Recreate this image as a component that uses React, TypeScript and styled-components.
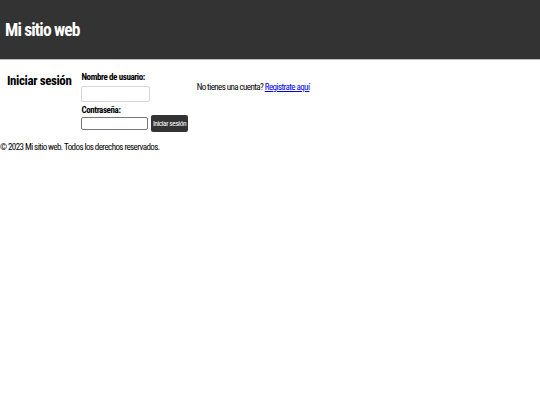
import React from "react";
import styled, { createGlobalStyle } from "styled-components";

const GlobalStyle = createGlobalStyle`
  html, body {
    margin: 0;
    padding: 0;
    background: #ffffff;
  }
  body {
    font-family: "Roboto Condensed", "Liberation Sans", Arial, sans-serif;
    color: #000000;
  }
`;

const Header = styled.header`
  display: flex;
  align-items: center;
  height: 59px;
  padding-left: 5px;
  background: #333333;
  border-bottom: 1px solid #b9b9b9;
`;

const SiteTitle = styled.h1`
  margin: 0;
  color: #ffffff;
  font-size: 17.5px;
  font-weight: 700;
  line-height: 20px;
  letter-spacing: -0.85px;
`;

const Main = styled.main`
  display: flex;
  align-items: flex-start;
  padding: 13px 0 0 7px;
`;

const SectionTitle = styled.h2`
  margin: 0;
  font-size: 13px;
  font-weight: 700;
  line-height: 15px;
  letter-spacing: -0.4px;
  white-space: nowrap;
`;

const LoginForm = styled.form`
  display: flex;
  flex-direction: column;
  align-items: flex-start;
  margin-left: 10px;
`;

const FieldLabel = styled.label<{ $gap?: number }>`
  display: block;
  margin-top: ${(p) => p.$gap ?? 0}px;
  font-size: 9px;
  font-weight: 700;
  line-height: 9px;
  letter-spacing: -0.4px;
  white-space: nowrap;
`;

const TextInput = styled.input`
  box-sizing: border-box;
  width: 69px;
  height: 15.5px;
  margin: 4px 0 0;
  padding: 0 3px;
  border: 1px solid #d6d6d6;
  border-radius: 2px;
  background: #ffffff;
  font: inherit;
  font-size: 8px;
`;

const PasswordRow = styled.div`
  display: flex;
  align-items: center;
`;

const PasswordInput = styled.input`
  box-sizing: border-box;
  width: 67px;
  height: 13.5px;
  margin: 0;
  padding: 0 2px;
  border: 1px solid #767676;
  border-radius: 2px;
  background: #ffffff;
  font: inherit;
  font-size: 8px;
`;

const SubmitButton = styled.button`
  box-sizing: border-box;
  height: 17.5px;
  margin-left: 3px;
  padding: 0 1.5px;
  border: none;
  border-radius: 2px;
  background: #333333;
  color: #ffffff;
  font-family: inherit;
  font-size: 7.5px;
  line-height: 17.5px;
  letter-spacing: -0.45px;
  white-space: nowrap;
  cursor: pointer;
`;

const SignupNote = styled.p`
  margin: 9px 0 0 9px;
  font-size: 9px;
  line-height: 10px;
  letter-spacing: -0.58px;
  white-space: nowrap;
`;

const SignupLink = styled.a`
  color: #0000ee;
  text-decoration: underline;

  &:visited {
    color: #0000ee;
  }
`;

const Footer = styled.footer`
  padding-top: 10px;
  font-size: 9px;
  line-height: 10px;
  letter-spacing: -0.58px;
  white-space: nowrap;
`;

export default function App() {
  return (
    <>
      <GlobalStyle />
      <Header>
        <SiteTitle>Mi sitio web</SiteTitle>
      </Header>
      <Main>
        <SectionTitle>Iniciar sesión</SectionTitle>
        <LoginForm onSubmit={(e) => e.preventDefault()}>
          <FieldLabel htmlFor="username">Nombre de usuario:</FieldLabel>
          <TextInput id="username" type="text" name="username" />
          <FieldLabel htmlFor="password" $gap={4}>
            Contraseña:
          </FieldLabel>
          <PasswordRow>
            <PasswordInput id="password" type="password" name="password" />
            <SubmitButton type="submit">Iniciar sesión</SubmitButton>
          </PasswordRow>
        </LoginForm>
        <SignupNote>
          No tienes una cuenta? <SignupLink href="#">Registrate aquí</SignupLink>
        </SignupNote>
      </Main>
      <Footer>© 2023 Mi sitio web. Todos los derechos reservados.</Footer>
    </>
  );
}
